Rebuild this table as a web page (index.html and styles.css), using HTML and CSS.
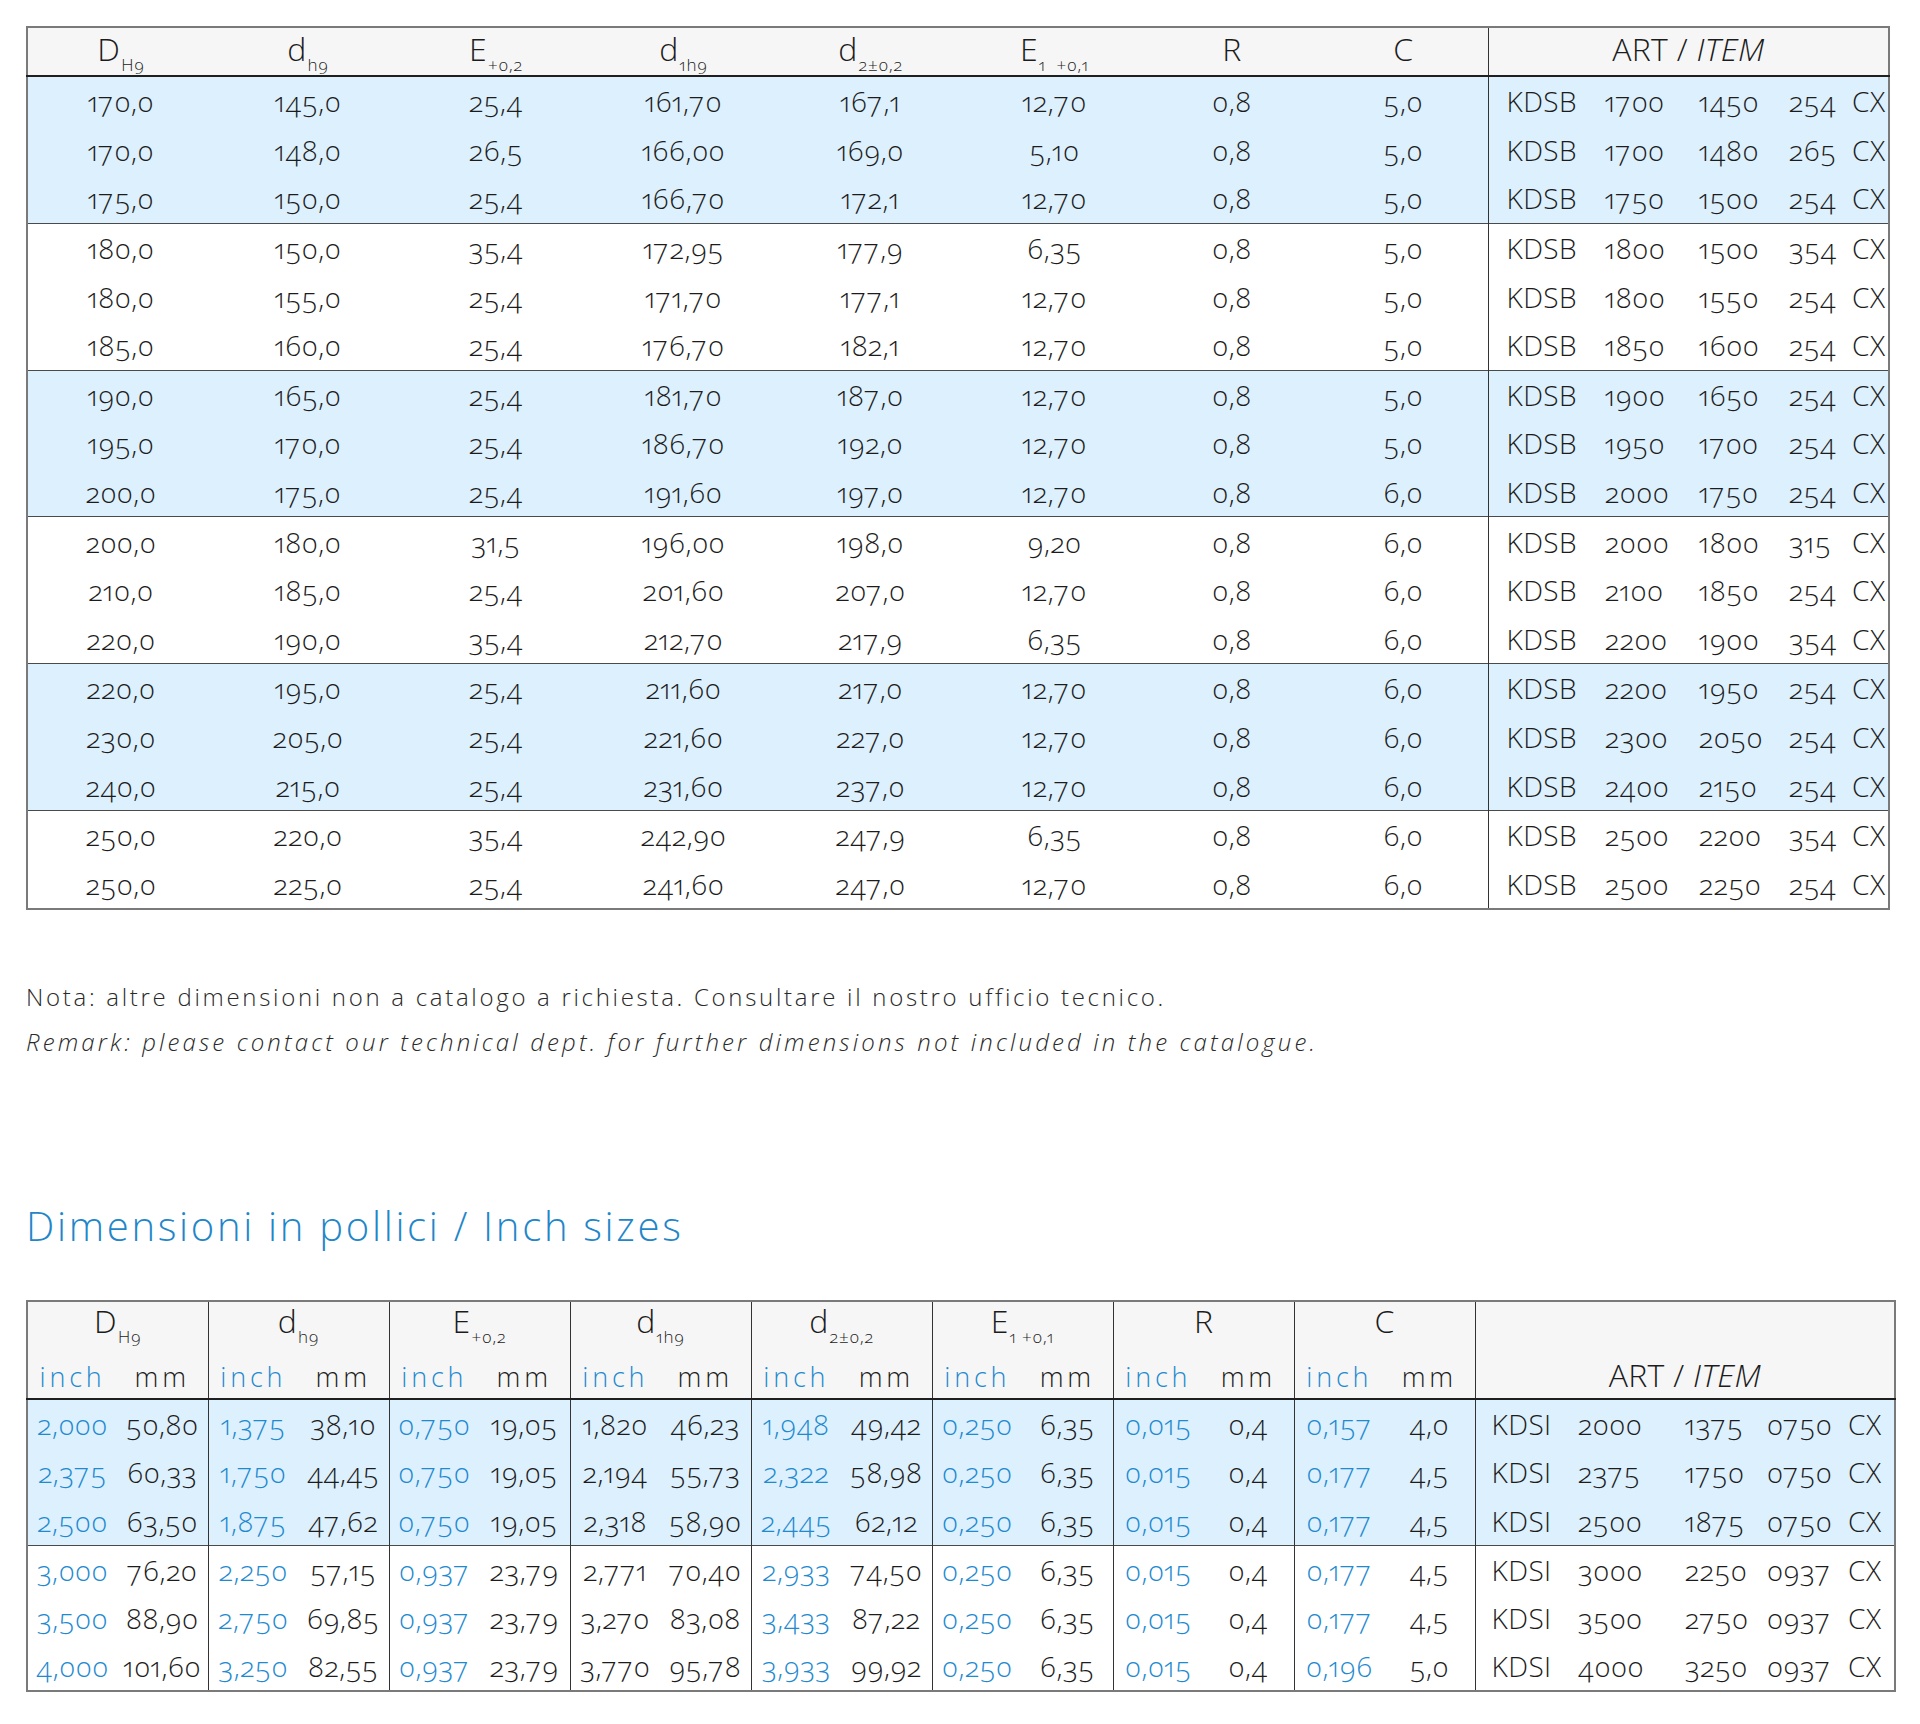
FILE: index.html
```html
<!DOCTYPE html>
<html lang="it">
<head>
<meta charset="utf-8">
<title>KDSB / KDSI</title>
<link rel="stylesheet" href="styles.css">
</head>
<body>
<div class="page">

<table class="t1">
<colgroup>
<col class="w1"><col class="w2"><col class="w3"><col class="w4"><col class="w5"><col class="w6"><col class="w7"><col class="w8">
<col class="a1"><col class="a2"><col class="a3"><col class="a4"><col class="a5">
</colgroup>
<thead>
<tr>
<th>D<sub>H9</sub></th>
<th>d<sub>h9</sub></th>
<th>E<sub>+0,2</sub></th>
<th>d<sub>1h9</sub></th>
<th>d<sub>2±0,2</sub></th>
<th>E<sub>1&nbsp;&nbsp;+0,1</sub></th>
<th>R</th>
<th>C</th>
<th colspan="5" class="art">ART / <i>ITEM</i></th>
</tr>
</thead>
<tbody class="blue">
<tr><td>170,0</td><td>145,0</td><td>25,4</td><td>161,70</td><td>167,1</td><td>12,70</td><td>0,8</td><td>5,0</td><td class="k">KDSB</td><td class="n">1700</td><td class="n">1450</td><td class="n">254</td><td class="n">CX</td></tr>
<tr><td>170,0</td><td>148,0</td><td>26,5</td><td>166,00</td><td>169,0</td><td>5,10</td><td>0,8</td><td>5,0</td><td class="k">KDSB</td><td class="n">1700</td><td class="n">1480</td><td class="n">265</td><td class="n">CX</td></tr>
<tr><td>175,0</td><td>150,0</td><td>25,4</td><td>166,70</td><td>172,1</td><td>12,70</td><td>0,8</td><td>5,0</td><td class="k">KDSB</td><td class="n">1750</td><td class="n">1500</td><td class="n">254</td><td class="n">CX</td></tr>
</tbody>
<tbody>
<tr><td>180,0</td><td>150,0</td><td>35,4</td><td>172,95</td><td>177,9</td><td>6,35</td><td>0,8</td><td>5,0</td><td class="k">KDSB</td><td class="n">1800</td><td class="n">1500</td><td class="n">354</td><td class="n">CX</td></tr>
<tr><td>180,0</td><td>155,0</td><td>25,4</td><td>171,70</td><td>177,1</td><td>12,70</td><td>0,8</td><td>5,0</td><td class="k">KDSB</td><td class="n">1800</td><td class="n">1550</td><td class="n">254</td><td class="n">CX</td></tr>
<tr><td>185,0</td><td>160,0</td><td>25,4</td><td>176,70</td><td>182,1</td><td>12,70</td><td>0,8</td><td>5,0</td><td class="k">KDSB</td><td class="n">1850</td><td class="n">1600</td><td class="n">254</td><td class="n">CX</td></tr>
</tbody>
<tbody class="blue">
<tr><td>190,0</td><td>165,0</td><td>25,4</td><td>181,70</td><td>187,0</td><td>12,70</td><td>0,8</td><td>5,0</td><td class="k">KDSB</td><td class="n">1900</td><td class="n">1650</td><td class="n">254</td><td class="n">CX</td></tr>
<tr><td>195,0</td><td>170,0</td><td>25,4</td><td>186,70</td><td>192,0</td><td>12,70</td><td>0,8</td><td>5,0</td><td class="k">KDSB</td><td class="n">1950</td><td class="n">1700</td><td class="n">254</td><td class="n">CX</td></tr>
<tr><td>200,0</td><td>175,0</td><td>25,4</td><td>191,60</td><td>197,0</td><td>12,70</td><td>0,8</td><td>6,0</td><td class="k">KDSB</td><td class="n">2000</td><td class="n">1750</td><td class="n">254</td><td class="n">CX</td></tr>
</tbody>
<tbody>
<tr><td>200,0</td><td>180,0</td><td>31,5</td><td>196,00</td><td>198,0</td><td>9,20</td><td>0,8</td><td>6,0</td><td class="k">KDSB</td><td class="n">2000</td><td class="n">1800</td><td class="n">315</td><td class="n">CX</td></tr>
<tr><td>210,0</td><td>185,0</td><td>25,4</td><td>201,60</td><td>207,0</td><td>12,70</td><td>0,8</td><td>6,0</td><td class="k">KDSB</td><td class="n">2100</td><td class="n">1850</td><td class="n">254</td><td class="n">CX</td></tr>
<tr><td>220,0</td><td>190,0</td><td>35,4</td><td>212,70</td><td>217,9</td><td>6,35</td><td>0,8</td><td>6,0</td><td class="k">KDSB</td><td class="n">2200</td><td class="n">1900</td><td class="n">354</td><td class="n">CX</td></tr>
</tbody>
<tbody class="blue">
<tr><td>220,0</td><td>195,0</td><td>25,4</td><td>211,60</td><td>217,0</td><td>12,70</td><td>0,8</td><td>6,0</td><td class="k">KDSB</td><td class="n">2200</td><td class="n">1950</td><td class="n">254</td><td class="n">CX</td></tr>
<tr><td>230,0</td><td>205,0</td><td>25,4</td><td>221,60</td><td>227,0</td><td>12,70</td><td>0,8</td><td>6,0</td><td class="k">KDSB</td><td class="n">2300</td><td class="n">2050</td><td class="n">254</td><td class="n">CX</td></tr>
<tr><td>240,0</td><td>215,0</td><td>25,4</td><td>231,60</td><td>237,0</td><td>12,70</td><td>0,8</td><td>6,0</td><td class="k">KDSB</td><td class="n">2400</td><td class="n">2150</td><td class="n">254</td><td class="n">CX</td></tr>
</tbody>
<tbody>
<tr><td>250,0</td><td>220,0</td><td>35,4</td><td>242,90</td><td>247,9</td><td>6,35</td><td>0,8</td><td>6,0</td><td class="k">KDSB</td><td class="n">2500</td><td class="n">2200</td><td class="n">354</td><td class="n">CX</td></tr>
<tr><td>250,0</td><td>225,0</td><td>25,4</td><td>241,60</td><td>247,0</td><td>12,70</td><td>0,8</td><td>6,0</td><td class="k">KDSB</td><td class="n">2500</td><td class="n">2250</td><td class="n">254</td><td class="n">CX</td></tr>
</tbody>
</table>

<div class="notes">
<p>Nota: altre dimensioni non a catalogo a richiesta. Consultare il nostro ufficio tecnico.</p>
<p class="en">Remark: please contact our technical dept. for further dimensions not included in the catalogue.</p>
</div>

<h2 class="title">Dimensioni in pollici / Inch sizes</h2>

<table class="t2">
<colgroup>
<col class="s90"><col class="s91"><col class="s90"><col class="s91"><col class="s90"><col class="s91"><col class="s90"><col class="s91">
<col class="s90"><col class="s91"><col class="s90"><col class="s91"><col class="s90"><col class="s91"><col class="s90"><col class="s91">
<col class="b1"><col class="b2"><col class="b3"><col class="b4"><col class="b5">
</colgroup>
<thead>
<tr class="h1">
<th colspan="2" class="g">D<sub>H9</sub></th>
<th colspan="2" class="g">d<sub>h9</sub></th>
<th colspan="2" class="g">E<sub>+0,2</sub></th>
<th colspan="2" class="g">d<sub>1h9</sub></th>
<th colspan="2" class="g">d<sub>2±0,2</sub></th>
<th colspan="2" class="g">E<sub>1 +0,1</sub></th>
<th colspan="2" class="g">R</th>
<th colspan="2" class="g">C</th>
<th colspan="5" rowspan="2" class="art art2">ART / <i>ITEM</i></th>
</tr>
<tr class="h2">
<th class="unit in">inch</th><th class="unit g">mm</th>
<th class="unit in">inch</th><th class="unit g">mm</th>
<th class="unit in">inch</th><th class="unit g">mm</th>
<th class="unit in">inch</th><th class="unit g">mm</th>
<th class="unit in">inch</th><th class="unit g">mm</th>
<th class="unit in">inch</th><th class="unit g">mm</th>
<th class="unit in">inch</th><th class="unit g">mm</th>
<th class="unit in">inch</th><th class="unit g">mm</th>
</tr>
</thead>
<tbody class="blue">
<tr><td class="in">2,000</td><td class="g">50,80</td><td class="in">1,375</td><td class="g">38,10</td><td class="in">0,750</td><td class="g">19,05</td><td>1,820</td><td class="g">46,23</td><td class="in">1,948</td><td class="g">49,42</td><td class="in">0,250</td><td class="g">6,35</td><td class="in">0,015</td><td class="g">0,4</td><td class="in">0,157</td><td class="g">4,0</td><td class="k">KDSI</td><td class="n">2000</td><td class="n">1375</td><td class="n">0750</td><td class="n">CX</td></tr>
<tr><td class="in">2,375</td><td class="g">60,33</td><td class="in">1,750</td><td class="g">44,45</td><td class="in">0,750</td><td class="g">19,05</td><td>2,194</td><td class="g">55,73</td><td class="in">2,322</td><td class="g">58,98</td><td class="in">0,250</td><td class="g">6,35</td><td class="in">0,015</td><td class="g">0,4</td><td class="in">0,177</td><td class="g">4,5</td><td class="k">KDSI</td><td class="n">2375</td><td class="n">1750</td><td class="n">0750</td><td class="n">CX</td></tr>
<tr><td class="in">2,500</td><td class="g">63,50</td><td class="in">1,875</td><td class="g">47,62</td><td class="in">0,750</td><td class="g">19,05</td><td>2,318</td><td class="g">58,90</td><td class="in">2,445</td><td class="g">62,12</td><td class="in">0,250</td><td class="g">6,35</td><td class="in">0,015</td><td class="g">0,4</td><td class="in">0,177</td><td class="g">4,5</td><td class="k">KDSI</td><td class="n">2500</td><td class="n">1875</td><td class="n">0750</td><td class="n">CX</td></tr>
</tbody>
<tbody>
<tr><td class="in">3,000</td><td class="g">76,20</td><td class="in">2,250</td><td class="g">57,15</td><td class="in">0,937</td><td class="g">23,79</td><td>2,771</td><td class="g">70,40</td><td class="in">2,933</td><td class="g">74,50</td><td class="in">0,250</td><td class="g">6,35</td><td class="in">0,015</td><td class="g">0,4</td><td class="in">0,177</td><td class="g">4,5</td><td class="k">KDSI</td><td class="n">3000</td><td class="n">2250</td><td class="n">0937</td><td class="n">CX</td></tr>
<tr><td class="in">3,500</td><td class="g">88,90</td><td class="in">2,750</td><td class="g">69,85</td><td class="in">0,937</td><td class="g">23,79</td><td>3,270</td><td class="g">83,08</td><td class="in">3,433</td><td class="g">87,22</td><td class="in">0,250</td><td class="g">6,35</td><td class="in">0,015</td><td class="g">0,4</td><td class="in">0,177</td><td class="g">4,5</td><td class="k">KDSI</td><td class="n">3500</td><td class="n">2750</td><td class="n">0937</td><td class="n">CX</td></tr>
<tr><td class="in">4,000</td><td class="g">101,60</td><td class="in">3,250</td><td class="g">82,55</td><td class="in">0,937</td><td class="g">23,79</td><td>3,770</td><td class="g">95,78</td><td class="in">3,933</td><td class="g">99,92</td><td class="in">0,250</td><td class="g">6,35</td><td class="in">0,015</td><td class="g">0,4</td><td class="in">0,196</td><td class="g">5,0</td><td class="k">KDSI</td><td class="n">4000</td><td class="n">3250</td><td class="n">0937</td><td class="n">CX</td></tr>
</tbody>
</table>

</div>
</body>
</html>
```

FILE: styles.css
```css
html, body {
  margin: 0;
  padding: 0;
  background: #ffffff;
}

body {
  font-family: "Open Sans", "Noto Sans", "Liberation Sans", sans-serif;
  font-stretch: 88%;
  font-weight: 350;
  color: #1c1c1c;
  font-variant-numeric: oldstyle-nums proportional-nums;
}

.page {
  padding: 26px 0 30px 26px;
}

table {
  border-collapse: collapse;
  table-layout: fixed;
}

th, td {
  padding: 0;
  text-align: center;
  vertical-align: middle;
  white-space: nowrap;
  overflow: visible;
}

th {
  background: #f6f6f6;
  font-weight: 300;
  font-size: 32px;
  font-stretch: 100%;
  letter-spacing: 0.3px;
  line-height: 34px;
  color: #1c1c1c;
  padding-bottom: 6px;
}

th sub {
  font-size: 17px;
  line-height: 0;
  vertical-align: -10px;
  margin-left: 1px;
  letter-spacing: 0.8px;
}

td {
  font-size: 28px;
  line-height: 30px;
  height: 48.6px;
  letter-spacing: 0.5px;
}

thead tr {
  border-bottom: 2px solid #1f1f1f;
}

tbody + tbody {
  border-top: 1px solid #4a4a4a;
}

tbody.blue td {
  background: #ddf0fd;
}

.art {
  border-left: 1px solid #333333;
}

.k {
  text-align: left;
  border-left: 1px solid #333333;
  letter-spacing: 0.4px;
}

.n {
  text-align: left;
}

/* table 1 */
.t1 {
  width: 1862px;
  border: 2px solid #7a7a7a;
}

.t1 th {
  height: 41px;
}

.t1 .k {
  padding-left: 18px;
}

.w1 { width: 187px; }
.w2 { width: 188px; }
.w3 { width: 188px; }
.w4 { width: 187px; }
.w5 { width: 187px; }
.w6 { width: 181px; }
.w7 { width: 174px; }
.w8 { width: 169px; }
.a1 { width: 117px; }
.a2 { width: 94px; }
.a3 { width: 90px; }
.a4 { width: 63px; }
.a5 { width: 37px; }

/* notes */
.notes {
  margin-top: 64px;
  font-size: 24px;
  font-stretch: 100%;
  font-weight: 350;
  letter-spacing: 2.7px;
  color: #2a2a2a;
}

.notes p {
  margin: 0;
  line-height: 45px;
}

.notes .en {
  font-style: italic;
  letter-spacing: 3.13px;
}

.title {
  margin: 137px 0 49px 0;
  font-size: 40px;
  font-stretch: 100%;
  line-height: 50px;
  font-weight: 300;
  letter-spacing: 2.7px;
  color: #1f87c9;
}

/* table 2 */
.t2 {
  width: 1868px;
  border: 2px solid #7a7a7a;
}

.t2 td {
  height: 48.2px;
}

.t2 thead tr.h1 {
  border-bottom: none;
}

.t2 .h1 th {
  height: 38px;
  padding-bottom: 10px;
}

.t2 .h2 th {
  height: 43px;
  padding-top: 5px;
  padding-bottom: 0;
}

.t2 .g {
  border-right: 1px solid #333333;
}

.t2 .unit {
  font-size: 27px;
  font-weight: 300;
  letter-spacing: 3.8px;
}

.t2 .in {
  color: #1e8ad0;
}

.t2 th.art2 {
  vertical-align: bottom;
  line-height: 40px;
  padding-top: 0;
  padding-bottom: 3px;
}

.t2 .k {
  padding-left: 16px;
}

.s90 { width: 90px; }
.s91 { width: 91px; }
.b1 { width: 103px; }
.b2 { width: 107px; }
.b3 { width: 82px; }
.b4 { width: 81px; }
.b5 { width: 47px; }
```
